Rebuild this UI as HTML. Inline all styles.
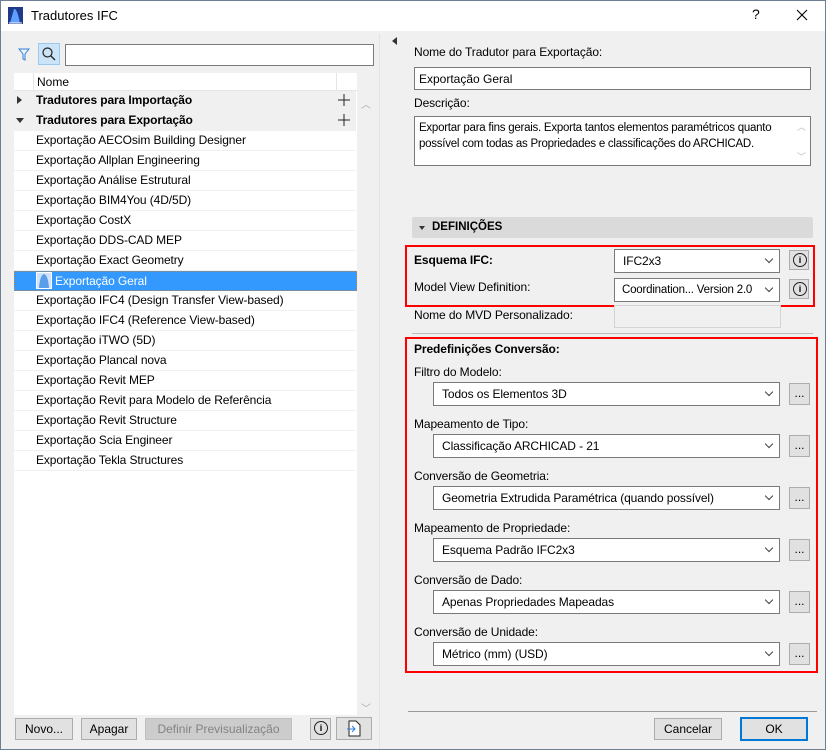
<!DOCTYPE html><html><head><meta charset="utf-8"><style>
*{box-sizing:border-box;margin:0;padding:0}
body{width:826px;height:750px;position:relative;background:#f0f0f0;font:12px "Liberation Sans",sans-serif;color:#000;overflow:hidden}
.a{position:absolute}
.win{left:0;top:0;width:826px;height:750px;border:1px solid #6e7f93}
.title{left:1px;top:1px;width:824px;height:30px;background:#fff}
.row{position:absolute;left:14px;width:342px;height:20px;border-bottom:1px solid #f0f0f0;line-height:19px;padding-left:22px;background:#fff;letter-spacing:-0.1px}
.inp{position:absolute;background:#fff;border:1px solid #7a7a7a}
.dd{position:absolute;left:433px;width:347px;height:24px;background:#fff;border:1px solid #7a7a7a;line-height:22px;padding-left:8px;letter-spacing:-0.1px}
.dd:after,.dd2:after{content:"";position:absolute;right:7px;top:6px;width:5px;height:5px;border-right:1px solid #444;border-bottom:1px solid #444;transform:rotate(45deg)}
.dot{position:absolute;left:789px;width:21px;height:22px;background:#e1e1e1;border:1px solid #adadad;text-align:center;line-height:18px}
.lbl{position:absolute;left:414px;letter-spacing:-0.1px}
.btn{position:absolute;height:22px;background:#e1e1e1;border:1px solid #adadad;text-align:center;line-height:20px}
.info{position:absolute;width:20px;height:20px;background:#e1e1e1;border:1px solid #adadad}
.info:after{content:"i";position:absolute;left:3px;top:2px;width:12px;height:12px;border:1px solid #222;border-radius:50%;font:bold 9px "Liberation Sans";text-align:center;line-height:12px}
</style></head><body>
<div class="a win"></div>
<div class="a title"></div>
<svg class="a" style="left:8px;top:7px" width="15" height="17"><rect x="0" y="0" width="15" height="17" fill="#1e3a8a"/><path d="M2 16 L6 2 Q9 1 12 16Z" fill="#5ea0ff"/><path d="M1 16h13" stroke="#fff"/></svg>
<div class="a" style="left:31px;top:8px;font-size:13px">Tradutores IFC</div>
<div class="a" style="left:752px;top:6px;font-size:14px">?</div>
<svg class="a" style="left:796px;top:9px" width="12" height="12"><path d="M1 1l10 10M11 1L1 11" stroke="#000" stroke-width="1.1"/></svg>

<svg class="a" style="left:18px;top:48px" width="12" height="14"><path d="M1 1h10l-4 5v6l-2-1v-5z" fill="none" stroke="#2f7fd7"/></svg>
<div class="a" style="left:38px;top:43px;width:22px;height:22px;background:#cce4f7;border:1px solid #99c9ef"></div>
<svg class="a" style="left:41px;top:46px" width="16" height="16"><circle cx="6.5" cy="6.5" r="4.5" fill="none" stroke="#222" stroke-width="1.2"/><path d="M10 10l4 4" stroke="#222" stroke-width="1.3"/></svg>
<div class="inp" style="left:65px;top:44px;width:309px;height:22px"></div>
<div class="a" style="left:392px;top:37px;width:0;height:0;border:4px solid transparent;border-right:5px solid #333;border-left:0"></div>

<div class="a" style="left:14px;top:73px;width:343px;height:642px;background:#fff"></div>
<div class="a" style="left:357px;top:91px;width:15px;height:624px;background:#f0f0f0"></div>
<div class="a" style="left:361px;top:96px;color:#aaa;font-size:10px">︿</div>
<div class="a" style="left:361px;top:700px;color:#aaa;font-size:10px">﹀</div>
<div class="a" style="left:14px;top:73px;width:343px;height:18px;background:#fff;border-bottom:1px solid #e5e5e5"></div>
<div class="a" style="left:33px;top:73px;width:1px;height:18px;background:#e5e5e5"></div>
<div class="a" style="left:336px;top:73px;width:1px;height:18px;background:#e5e5e5"></div>
<div class="a" style="left:37px;top:75px">Nome</div>
<div class="row" style="top:91px;background:#f0f0f0;font-weight:bold">Tradutores para Importação</div>
<div class="row" style="top:111px;background:#f0f0f0;font-weight:bold">Tradutores para Exportação</div>
<div class="a" style="left:17px;top:96px;border:4px solid transparent;border-left:5px solid #333;border-right:0"></div>
<div class="a" style="left:16px;top:118px;border:4px solid transparent;border-top:5px solid #333;border-bottom:0"></div>
<svg class="a" style="left:338px;top:94px" width="12" height="12"><path d="M6 0v12M0 6h12" stroke="#222"/></svg>
<svg class="a" style="left:338px;top:114px" width="12" height="12"><path d="M6 0v12M0 6h12" stroke="#222"/></svg>
<div class="row" style="top:131px">Exportação AECOsim Building Designer</div>
<div class="row" style="top:151px">Exportação Allplan Engineering</div>
<div class="row" style="top:171px">Exportação Análise Estrutural</div>
<div class="row" style="top:191px">Exportação BIM4You (4D/5D)</div>
<div class="row" style="top:211px">Exportação CostX</div>
<div class="row" style="top:231px">Exportação DDS-CAD MEP</div>
<div class="row" style="top:251px">Exportação Exact Geometry</div>
<div class="row" style="top:271px;background:#3399ff;color:#fff;border:1px dotted #b8864e;padding-left:40px;width:343px">Exportação Geral</div>
<svg class="a" style="left:36px;top:272px" width="16" height="17"><rect x=".5" y=".5" width="15" height="16" fill="#cfe3ff" stroke="#fff"/><path d="M3 16 Q4 3 8 2 Q12 3 13 16" fill="#5a9de8"/></svg>
<div class="row" style="top:291px">Exportação IFC4 (Design Transfer View-based)</div>
<div class="row" style="top:311px">Exportação IFC4 (Reference View-based)</div>
<div class="row" style="top:331px">Exportação iTWO (5D)</div>
<div class="row" style="top:351px">Exportação Plancal nova</div>
<div class="row" style="top:371px">Exportação Revit MEP</div>
<div class="row" style="top:391px">Exportação Revit para Modelo de Referência</div>
<div class="row" style="top:411px">Exportação Revit Structure</div>
<div class="row" style="top:431px">Exportação Scia Engineer</div>
<div class="row" style="top:451px">Exportação Tekla Structures</div>

<div class="btn" style="left:15px;top:718px;width:58px">Novo...</div>
<div class="btn" style="left:81px;top:718px;width:56px">Apagar</div>
<div class="btn" style="left:145px;top:718px;width:147px;background:#cccccc;border-color:#bfbfbf;color:#838383">Definir Previsualização</div>
<div class="info" style="left:310px;top:718px;width:21px;height:22px"></div>
<div class="btn" style="left:336px;top:717px;width:36px;height:23px"></div>
<svg class="a" style="left:347px;top:720px" width="14" height="17"><path d="M2 1h7l4 4v11H2z" fill="#fff" stroke="#222"/><path d="M0 9h8M5 6l3 3-3 3" stroke="#2f7fd7" fill="none"/></svg>

<div class="a" style="left:379px;top:34px;width:1px;height:715px;background:#e3e3e3"></div>
<div class="lbl" style="top:45px">Nome do Tradutor para Exportação:</div>
<div class="inp" style="left:414px;top:67px;width:397px;height:23px;padding:4px 0 0 4px">Exportação Geral</div>
<div class="lbl" style="top:96px">Descrição:</div>
<div class="inp" style="left:414px;top:116px;width:397px;height:50px;padding:3px 20px 0 4px;line-height:16px;font-size:11.5px;letter-spacing:-0.25px">Exportar para fins gerais. Exporta tantos elementos paramétricos quanto possível com todas as Propriedades e classificações do ARCHICAD.</div>
<div class="a" style="left:797px;top:120px;color:#bbb;font-size:9px">︿</div>
<div class="a" style="left:797px;top:150px;color:#bbb;font-size:9px">﹀</div>
<div class="a" style="left:412px;top:217px;width:401px;height:21px;background:#dadada;border-radius:2px"></div>
<div class="a" style="left:419px;top:226px;border:3.5px solid transparent;border-top:4px solid #333;border-bottom:0"></div>
<div class="a" style="left:432px;top:221px;font-weight:bold;font-size:11.5px">DEFINIÇÕES</div>

<div class="a" style="left:405px;top:245px;width:410px;height:62px;border:2px solid #f00"></div>
<div class="lbl" style="top:253px;font-weight:bold">Esquema IFC:</div>
<div class="dd dd2" style="left:614px;width:166px;top:249px">IFC2x3</div>
<div class="info" style="left:789px;top:250px"></div>
<div class="lbl" style="top:280px">Model View Definition:</div>
<div class="dd dd2" style="left:614px;width:166px;top:278px;padding-left:7px;font-size:11.5px;letter-spacing:-0.2px">Coordination... Version 2.0</div>
<div class="info" style="left:789px;top:279px"></div>
<div class="lbl" style="top:308px">Nome do MVD Personalizado:</div>
<div class="a" style="left:614px;top:305px;width:167px;height:23px;border:1px solid #d4d4d4;background:#f0f0f0"></div>
<div class="a" style="left:412px;top:333px;width:401px;height:1px;background:#bbb"></div>

<div class="a" style="left:405px;top:337px;width:413px;height:336px;border:2px solid #f00"></div>
<div class="lbl" style="top:342px;font-weight:bold">Predefinições Conversão:</div>
<div class="lbl" style="top:365px">Filtro do Modelo:</div>
<div class="dd" style="top:382px">Todos os Elementos 3D</div><div class="dot" style="top:383px">...</div>
<div class="lbl" style="top:417px">Mapeamento de Tipo:</div>
<div class="dd" style="top:434px">Classificação ARCHICAD - 21</div><div class="dot" style="top:435px">...</div>
<div class="lbl" style="top:469px">Conversão de Geometria:</div>
<div class="dd" style="top:486px">Geometria Extrudida Paramétrica (quando possível)</div><div class="dot" style="top:487px">...</div>
<div class="lbl" style="top:521px">Mapeamento de Propriedade:</div>
<div class="dd" style="top:538px">Esquema Padrão IFC2x3</div><div class="dot" style="top:539px">...</div>
<div class="lbl" style="top:573px">Conversão de Dado:</div>
<div class="dd" style="top:590px">Apenas Propriedades Mapeadas</div><div class="dot" style="top:591px">...</div>
<div class="lbl" style="top:625px">Conversão de Unidade:</div>
<div class="dd" style="top:642px">Métrico (mm) (USD)</div><div class="dot" style="top:643px">...</div>

<div class="a" style="left:408px;top:711px;width:409px;height:1px;background:#999"></div>
<div class="btn" style="left:654px;top:718px;width:68px">Cancelar</div>
<div class="btn" style="left:740px;top:717px;width:68px;height:24px;border:2px solid #0078d7;line-height:20px">OK</div>
</body></html>
